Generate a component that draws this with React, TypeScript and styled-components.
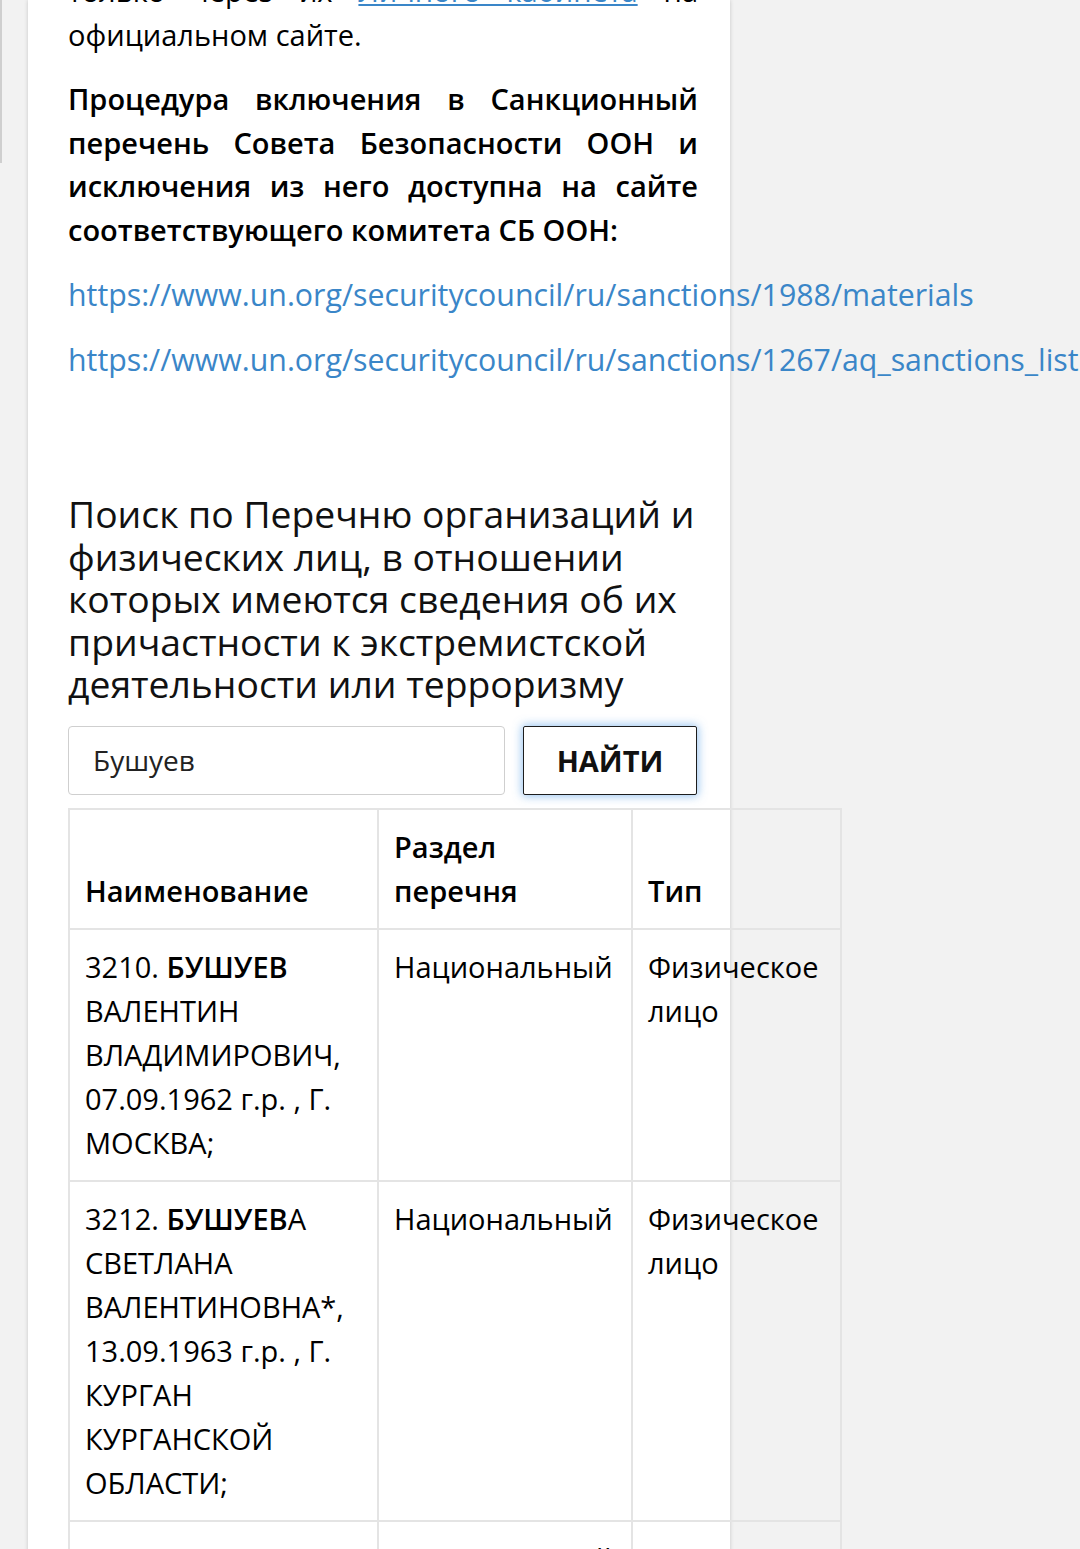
import React from 'react'
import styled, { createGlobalStyle } from 'styled-components'

const GlobalStyle = createGlobalStyle`
  html, body {
    margin: 0;
    padding: 0;
    background: #f2f2f2;
    overflow: hidden;
  }
  body {
    font-family: 'Open Sans', 'Noto Sans', 'Liberation Sans', sans-serif;
    color: #000;
  }
`

type Row = {
  num: string
  bold: string
  rest: string
  section: string
  kind: string
}

const rows: Row[] = [
  {
    num: '3210.',
    bold: 'БУШУЕВ',
    rest: ' ВАЛЕНТИН ВЛАДИМИРОВИЧ, 07.09.1962 г.р. , Г. МОСКВА;',
    section: 'Национальный',
    kind: 'Физическое лицо'
  },
  {
    num: '3212.',
    bold: 'БУШУЕВ',
    rest: 'А СВЕТЛАНА ВАЛЕНТИНОВНА*, 13.09.1963 г.р. , Г. КУРГАН КУРГАНСКОЙ ОБЛАСТИ;',
    section: 'Национальный',
    kind: 'Физическое лицо'
  },
  {
    num: '3211.',
    bold: 'БУШУЕВ',
    rest: 'А ЕЛЕНА ВАЛЕНТИНОВНА, 1965 г.р.;',
    section: 'Национальный',
    kind: 'Физическое лицо'
  }
]

const links = [
  'https://www.un.org/securitycouncil/ru/sanctions/1988/materials',
  'https://www.un.org/securitycouncil/ru/sanctions/1267/aq_sanctions_list'
]

export default function App() {
  return (
    <>
      <GlobalStyle />
      <Page>
        <Rail />
        <Column>
          <Paragraph $justify $lead>
            только через их <InlineLink href="#">Личного кабинета</InlineLink> на официальном сайте.
          </Paragraph>
          <Paragraph $justify $bold>
            Процедура включения в Санкционный перечень Совета Безопасности ООН и исключения из него
            доступна на сайте соответствующего комитета СБ ООН:
          </Paragraph>
          {links.map((href) => (
            <Paragraph key={href}>
              <UrlLink href="#">{href}</UrlLink>
            </Paragraph>
          ))}

          <Heading>
            Поиск по Перечню организаций и физических лиц, в отношении которых имеются сведения об их
            причастности к экстремистской деятельности или терроризму
          </Heading>

          <SearchForm onSubmit={(e) => e.preventDefault()}>
            <SearchInput defaultValue="Бушуев" />
            <SearchButton type="submit">НАЙТИ</SearchButton>
          </SearchForm>

          <ResultTable>
            <colgroup>
              <col style={{ width: 309 }} />
              <col style={{ width: 254 }} />
              <col style={{ width: 209 }} />
            </colgroup>
            <thead>
              <tr>
                <HeadCell>Наименование</HeadCell>
                <HeadCell>Раздел перечня</HeadCell>
                <HeadCell>Тип</HeadCell>
              </tr>
            </thead>
            <tbody>
              {rows.map((r) => (
                <tr key={r.num}>
                  <Cell>
                    {r.num} <b>{r.bold}</b>
                    {r.rest}
                  </Cell>
                  <Cell>{r.section}</Cell>
                  <Cell>{r.kind}</Cell>
                </tr>
              ))}
            </tbody>
          </ResultTable>
        </Column>
      </Page>
    </>
  )
}

const Page = styled.div`
  display: flex;
  align-items: flex-start;
  min-height: 1549px;
`

const Rail = styled.div`
  flex: none;
  width: 2px;
  height: 163px;
  background: #cfcfcf;
`

const Column = styled.div`
  flex: none;
  width: 702px;
  min-height: 1600px;
  margin-left: 26px;
  box-sizing: border-box;
  padding: 0 32px 0 40px;
  background: #fff;
  box-shadow: 0 0 4px rgba(0, 0, 0, 0.18);
`

const Paragraph = styled.p<{ $justify?: boolean; $bold?: boolean; $lead?: boolean }>`
  margin: ${({ $lead }) => ($lead ? '-31px 0 21px' : '0 0 21.5px')};
  font-size: 29px;
  line-height: 43.5px;
  font-weight: ${({ $bold }) => ($bold ? 600 : 400)};
  text-align: ${({ $justify }) => ($justify ? 'justify' : 'left')};
  white-space: ${({ $justify }) => ($justify ? 'normal' : 'nowrap')};
`

const InlineLink = styled.a`
  color: #3a86c8;
  text-decoration: underline;
`

const UrlLink = styled.a`
  color: #3a86c8;
  font-size: 30.3px;
  text-decoration: none;
`

const Heading = styled.h2`
  margin: 112px 0 20px;
  font-size: 37.3px;
  line-height: 42.5px;
  font-weight: 400;
  color: #111;
`

const SearchForm = styled.form`
  display: flex;
  align-items: stretch;
  gap: 18px;
  width: 630px;
  height: 69px;
  margin-bottom: 13px;
`

const SearchInput = styled.input`
  width: 437px;
  box-sizing: border-box;
  padding: 0 24px;
  border: 1px solid #cfcfcf;
  border-radius: 4px;
  font-family: inherit;
  font-size: 28px;
  color: #222;
  outline: none;
`

const SearchButton = styled.button`
  width: 174px;
  box-sizing: border-box;
  border: 1.5px solid #1d1d1d;
  border-radius: 2px;
  background: #fff;
  font-family: inherit;
  font-size: 29px;
  font-weight: 700;
  color: #111;
  box-shadow: 0 0 10px 1px rgba(102, 168, 233, 0.7);
`

const ResultTable = styled.table`
  width: 772px;
  table-layout: fixed;
  border-collapse: collapse;
  border: 2px solid #e4e4e4;
`

const HeadCell = styled.th`
  padding: 15px 15px;
  border: 2px solid #e4e4e4;
  text-align: left;
  vertical-align: bottom;
  font-size: 29px;
  line-height: 44px;
  font-weight: 600;
`

const Cell = styled.td`
  padding: 15px 15px;
  border: 2px solid #e4e4e4;
  vertical-align: top;
  font-size: 29px;
  line-height: 44px;
  font-weight: 400;

  b {
    font-weight: 600;
  }
`
